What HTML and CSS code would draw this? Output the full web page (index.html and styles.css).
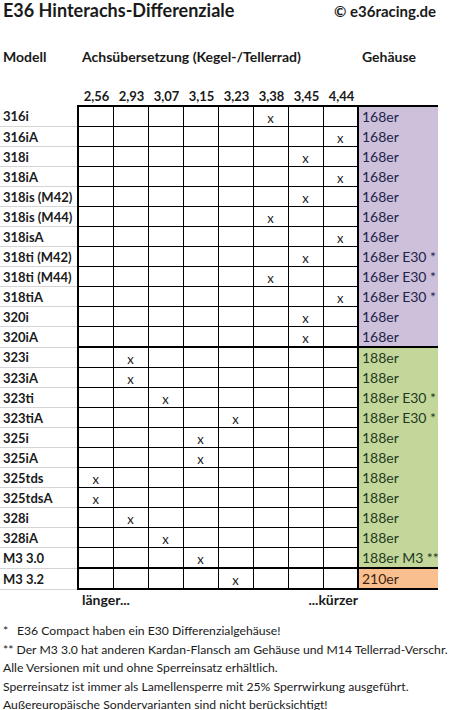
FILE: index.html
```html
<!DOCTYPE html>
<html lang="de">
<head>
    <meta charset="UTF-8">
    <meta name="viewport" content="width=device-width, initial-scale=1.0">
    <title>E36 Hinterachs-Differenziale</title>
    <link rel="stylesheet" href="styles.css">
</head>
<body>
    <div class="sheet">
        <header class="title-row">
            <h1>E36 Hinterachs-Differenziale</h1>
            <span class="copy">© e36racing.de</span>
        </header>

        <div class="head-row">
            <span>Modell</span>
            <span>Achsübersetzung (Kegel-/Tellerrad)</span>
            <span>Gehäuse</span>
        </div>

        <div class="ratio-head">
            <span></span>
            <span>2,56</span><span>2,93</span><span>3,07</span><span>3,15</span>
            <span>3,23</span><span>3,38</span><span>3,45</span><span>4,44</span>
        </div>

        <table class="diff-table">
            <colgroup>
                <col class="c-model">
                <col class="c-ratio"><col class="c-ratio"><col class="c-ratio"><col class="c-ratio">
                <col class="c-ratio"><col class="c-ratio"><col class="c-ratio"><col class="c-ratio">
                <col class="c-case">
            </colgroup>
            <tbody>
                <tr class="first"><th>316i</th><td></td><td></td><td></td><td></td><td></td><td>x</td><td></td><td></td><td class="case c168">168er</td></tr>
                <tr><th>316iA</th><td></td><td></td><td></td><td></td><td></td><td></td><td></td><td>x</td><td class="case c168">168er</td></tr>
                <tr><th>318i</th><td></td><td></td><td></td><td></td><td></td><td></td><td>x</td><td></td><td class="case c168">168er</td></tr>
                <tr><th>318iA</th><td></td><td></td><td></td><td></td><td></td><td></td><td></td><td>x</td><td class="case c168">168er</td></tr>
                <tr><th>318is (M42)</th><td></td><td></td><td></td><td></td><td></td><td></td><td>x</td><td></td><td class="case c168">168er</td></tr>
                <tr><th>318is (M44)</th><td></td><td></td><td></td><td></td><td></td><td>x</td><td></td><td></td><td class="case c168">168er</td></tr>
                <tr><th>318isA</th><td></td><td></td><td></td><td></td><td></td><td></td><td></td><td>x</td><td class="case c168">168er</td></tr>
                <tr><th>318ti (M42)</th><td></td><td></td><td></td><td></td><td></td><td></td><td>x</td><td></td><td class="case c168">168er E30 *</td></tr>
                <tr><th>318ti (M44)</th><td></td><td></td><td></td><td></td><td></td><td>x</td><td></td><td></td><td class="case c168">168er E30 *</td></tr>
                <tr><th>318tiA</th><td></td><td></td><td></td><td></td><td></td><td></td><td></td><td>x</td><td class="case c168">168er E30 *</td></tr>
                <tr><th>320i</th><td></td><td></td><td></td><td></td><td></td><td></td><td>x</td><td></td><td class="case c168">168er</td></tr>
                <tr class="group-end"><th>320iA</th><td></td><td></td><td></td><td></td><td></td><td></td><td>x</td><td></td><td class="case c168">168er</td></tr>
                <tr><th>323i</th><td></td><td>x</td><td></td><td></td><td></td><td></td><td></td><td></td><td class="case c188">188er</td></tr>
                <tr><th>323iA</th><td></td><td>x</td><td></td><td></td><td></td><td></td><td></td><td></td><td class="case c188">188er</td></tr>
                <tr><th>323ti</th><td></td><td></td><td>x</td><td></td><td></td><td></td><td></td><td></td><td class="case c188">188er E30 *</td></tr>
                <tr><th>323tiA</th><td></td><td></td><td></td><td></td><td>x</td><td></td><td></td><td></td><td class="case c188">188er E30 *</td></tr>
                <tr><th>325i</th><td></td><td></td><td></td><td>x</td><td></td><td></td><td></td><td></td><td class="case c188">188er</td></tr>
                <tr><th>325iA</th><td></td><td></td><td></td><td>x</td><td></td><td></td><td></td><td></td><td class="case c188">188er</td></tr>
                <tr><th>325tds</th><td>x</td><td></td><td></td><td></td><td></td><td></td><td></td><td></td><td class="case c188">188er</td></tr>
                <tr><th>325tdsA</th><td>x</td><td></td><td></td><td></td><td></td><td></td><td></td><td></td><td class="case c188">188er</td></tr>
                <tr><th>328i</th><td></td><td>x</td><td></td><td></td><td></td><td></td><td></td><td></td><td class="case c188">188er</td></tr>
                <tr><th>328iA</th><td></td><td></td><td>x</td><td></td><td></td><td></td><td></td><td></td><td class="case c188">188er</td></tr>
                <tr class="group-end"><th>M3 3.0</th><td></td><td></td><td></td><td>x</td><td></td><td></td><td></td><td></td><td class="case c188">188er M3 **</td></tr>
                <tr class="last"><th>M3 3.2</th><td></td><td></td><td></td><td></td><td>x</td><td></td><td></td><td></td><td class="case c210">210er</td></tr>
            </tbody>
        </table>

        <div class="scale-row">
            <span>länger...</span>
            <span>...kürzer</span>
        </div>

        <div class="notes">
            <p><span class="star">*</span>E36 Compact haben ein E30 Differenzialgehäuse!</p>
            <p>** Der M3 3.0 hat anderen Kardan-Flansch am Gehäuse und M14 Tellerrad-Verschr.</p>
            <p>Alle Versionen mit und ohne Sperreinsatz erhältlich.</p>
            <p>Sperreinsatz ist immer als Lamellensperre mit 25% Sperrwirkung ausgeführt.</p>
            <p>Außereuropäische Sondervarianten sind nicht berücksichtigt!</p>
        </div>
    </div>
</body>
</html>
```

FILE: styles.css
```css
body {
    margin: 0;
    font-family: Lato, 'Liberation Sans', sans-serif;
    color: #1a1a1a;
    background-color: #fff;
}

.sheet {
    width: 450px;
}

.title-row {
    display: flex;
    justify-content: space-between;
    align-items: center;
    width: 433px;
    height: 21px;
    padding-left: 3px;
}

.title-row h1 {
    margin: 0;
    font-size: 18px;
    font-weight: bold;
    line-height: 21px;
}

.copy {
    font-size: 15px;
    font-weight: bold;
}

.head-row {
    display: grid;
    grid-template-columns: 79px 280px 79px;
    margin-top: 26px;
    height: 20px;
    line-height: 20px;
    font-size: 14px;
    font-weight: bold;
}

.head-row span {
    padding-left: 3px;
}

.ratio-head {
    display: grid;
    grid-template-columns: 79px repeat(8, 35px);
    margin-top: 20px;
    height: 18px;
    line-height: 18px;
    font-size: 13px;
    font-weight: bold;
    text-align: center;
}

.diff-table {
    border-collapse: collapse;
    table-layout: fixed;
    width: 438px;
    font-size: 13px;
}

.c-model {
    width: 78px;
}

.c-ratio {
    width: 35px;
}

.c-case {
    width: 80px;
}

.diff-table tr {
    height: 20px;
}

.diff-table th {
    padding: 0 0 0 3px;
    text-align: left;
    font-weight: bold;
    border-bottom: 1px solid #d4d4d4;
    white-space: nowrap;
}

.diff-table td {
    padding: 3px 0 0 0;
    text-align: center;
    border: 1px solid #000;
    line-height: 16px;
}

.diff-table td:nth-child(2) {
    border-left: 2px solid #000;
}

.diff-table tr.first td {
    border-top: 2px solid #000;
}

.diff-table tr.group-end td,
.diff-table tr.last td {
    border-bottom: 2px solid #000;
}

.diff-table td.case {
    border: none;
    border-left: 2px solid #000;
    padding: 1px 0 0 3px;
    text-align: left;
    font-size: 14px;
    white-space: nowrap;
}

.c168 {
    background-color: #ccc0da;
    color: #23234a;
}

.c188 {
    background-color: #c4d79b;
    color: #1f3a1f;
}

.c210 {
    background-color: #fabf8f;
    color: #3a1f10;
}

.scale-row {
    display: flex;
    justify-content: space-between;
    width: 276px;
    margin-left: 82px;
    height: 20px;
    line-height: 20px;
    font-size: 14px;
    font-weight: bold;
}

.notes {
    margin-top: 12px;
    font-size: 12.2px;
}

.notes p {
    margin: 0;
    padding-left: 3px;
    line-height: 18.5px;
    white-space: nowrap;
}

.star {
    display: inline-block;
    width: 14px;
}
```
